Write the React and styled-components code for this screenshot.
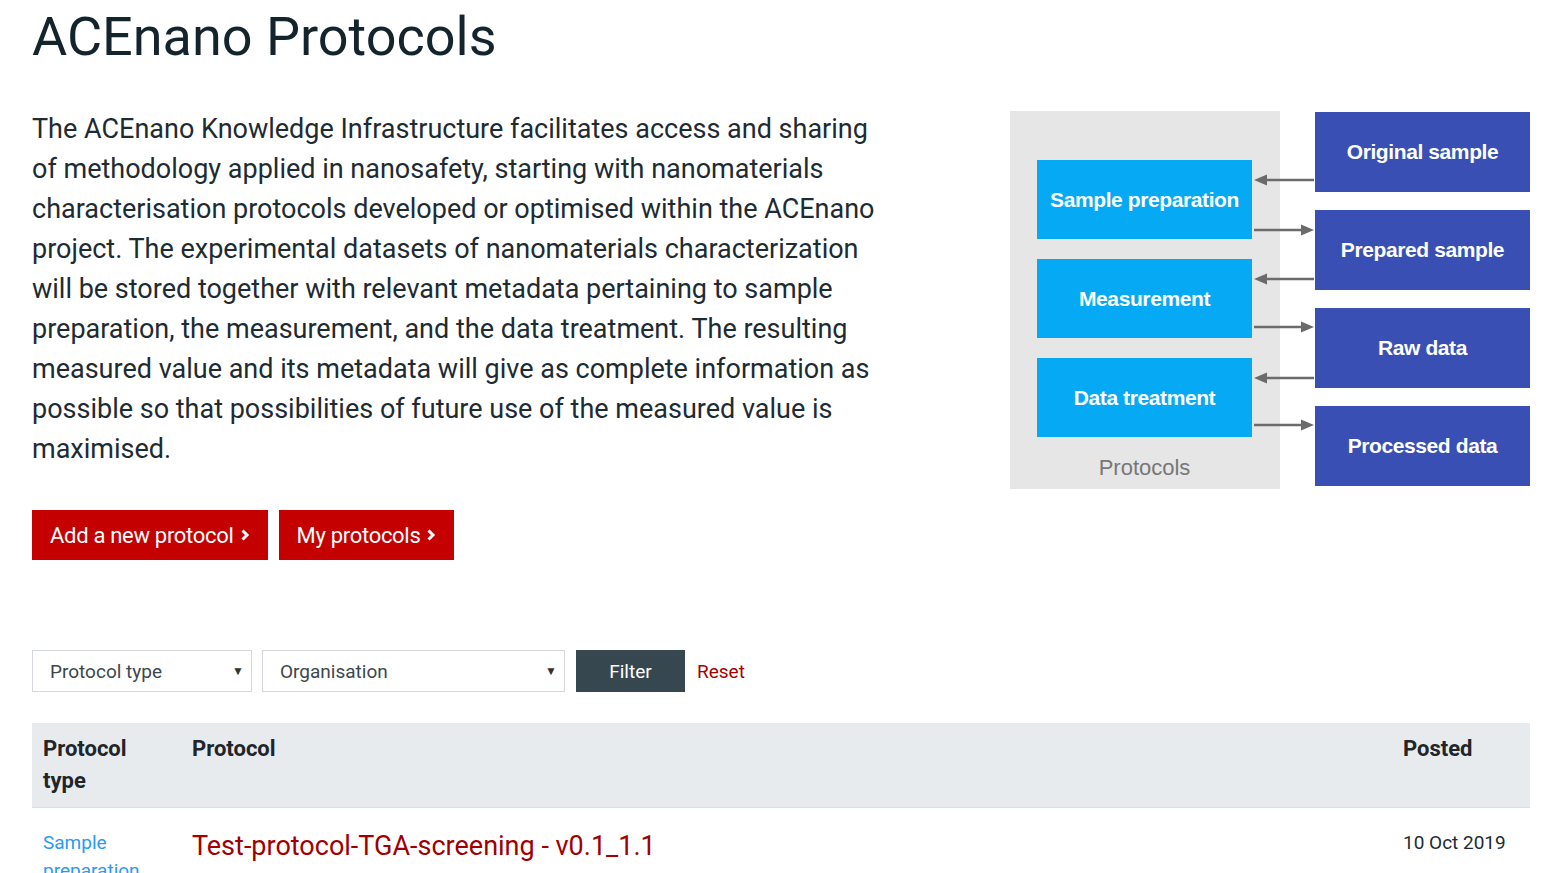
import React from 'react';
import styled, { createGlobalStyle } from 'styled-components';

const GlobalStyle = createGlobalStyle`
  html, body {
    margin: 0;
    padding: 0;
    background: #fff;
    font-family: Roboto, "Noto Sans", sans-serif;
    color: #1d2b33;
  }
`;

const Page = styled.div`
  padding: 0 17px 0 32px;
`;

const Title = styled.h1`
  margin: 0;
  padding-top: 4px;
  font-size: 54px;
  font-weight: 400;
  line-height: 66px;
  color: #14242c;
`;

const Intro = styled.div`
  display: flex;
  justify-content: space-between;
  align-items: flex-start;
  margin-top: 39px;
`;

const IntroColumn = styled.div`
  width: 855px;
`;

const IntroText = styled.p`
  margin: 0;
  font-size: 27px;
  line-height: 40px;
  color: #1d2b33;
`;

const Diagram = styled.div`
  position: relative;
  display: flex;
  justify-content: space-between;
  width: 520px;
  margin-top: 2px;
  font-family: "Liberation Sans", Arial, sans-serif;
  font-weight: 700;
`;

const StagePanel = styled.div`
  display: flex;
  flex-direction: column;
  gap: 20px;
  width: 270px;
  height: 378px;
  box-sizing: border-box;
  padding: 49px 28px 0 27px;
  background: #e6e6e6;
`;

const Stage = styled.div`
  display: flex;
  align-items: center;
  justify-content: center;
  height: 79px;
  background: #06a9f4;
  color: #fff;
  font-size: 21px;
  letter-spacing: -0.4px;
`;

const PanelLabel = styled.div`
  margin-top: -2px;
  text-align: center;
  color: #777;
  font-size: 22px;
  font-weight: 400;
`;

const DataColumn = styled.div`
  display: flex;
  flex-direction: column;
  gap: 18px;
  width: 215px;
  padding-top: 1px;
`;

const DataBox = styled.div`
  display: flex;
  align-items: center;
  justify-content: center;
  height: 80px;
  background: #3a4fb4;
  color: #fff;
  font-size: 21px;
  letter-spacing: -0.4px;
`;

const Arrows = styled.svg`
  position: absolute;
  left: 242px;
  top: 0;
  width: 64px;
  height: 380px;
  overflow: visible;
`;

const Actions = styled.div`
  display: flex;
  gap: 11px;
  margin-top: 41px;
`;

const RedButton = styled.a`
  display: inline-flex;
  align-items: center;
  gap: 6px;
  height: 50px;
  padding: 0 18px;
  background: #c40000;
  color: #fff;
  font-size: 22px;
  text-decoration: none;
  letter-spacing: -0.3px;
`;

const Filters = styled.div`
  display: flex;
  align-items: center;
  gap: 10px;
  margin-top: 90px;
`;

const Select = styled.div`
  display: flex;
  align-items: center;
  justify-content: space-between;
  width: ${p => p.$width}px;
  height: 42px;
  box-sizing: border-box;
  padding: 0 7px 0 17px;
  border: 1px solid #d4d8dc;
  font-size: 19px;
  color: #3c474d;
`;

const Caret = styled.span`
  font-size: 12px;
  color: #333;
`;

const FilterButton = styled.button`
  height: 42px;
  width: 109px;
  margin-left: 1px;
  border: none;
  background: #37474f;
  color: #fff;
  font-family: Roboto, sans-serif;
  font-size: 19px;
`;

const ResetLink = styled.a`
  margin-left: 2px;
  color: #a50000;
  font-size: 19px;
  text-decoration: none;
`;

const Table = styled.div`
  margin-top: 31px;
`;

const Row = styled.div`
  display: grid;
  grid-template-columns: 149px 1fr 138px;
  padding: ${p => (p.$head ? '10px 0' : '19px 0')};
  background: ${p => (p.$head ? '#e8ebee' : 'transparent')};
  border-bottom: ${p => (p.$head ? '1px solid #dadfe3' : 'none')};
`;

const HeadCell = styled.div`
  padding: 0 11px;
  font-size: 22px;
  font-weight: 700;
  line-height: 32px;
  color: #212529;
`;

const TypeLink = styled.a`
  display: block;
  padding: 2px 11px 0;
  color: #2b9af3;
  font-size: 19px;
  line-height: 28px;
  text-decoration: none;
`;

const TitleLink = styled.a`
  display: block;
  padding: 0 11px;
  color: #a00000;
  font-size: 27px;
  line-height: 38px;
  text-decoration: none;
`;

const DateCell = styled.div`
  padding: 2px 11px 0;
  font-size: 19px;
  line-height: 28px;
  color: #1d2b33;
`;

const Chevron = () => (
  <svg width="10" height="14" viewBox="0 0 10 14">
    <path d="M2.5 2.5 L7 7 L2.5 11.5" fill="none" stroke="#fff" strokeWidth="3" />
  </svg>
);

const Arrow = ({ y, dir }) => {
  const left = dir === 'left';
  const tipX = left ? 2 : 62;
  const baseX = left ? 15 : 49;
  return (
    <g>
      <line x1={left ? 62 : 2} y1={y} x2={baseX} y2={y} stroke="#6b6b6b" strokeWidth="2.6" />
      <polygon points={`${tipX},${y} ${baseX},${y - 5.5} ${baseX},${y + 5.5}`} fill="#6b6b6b" />
    </g>
  );
};

const stages = ['Sample preparation', 'Measurement', 'Data treatment'];
const data = ['Original sample', 'Prepared sample', 'Raw data', 'Processed data'];

export default function App() {
  return (
    <>
      <GlobalStyle />
      <Page>
        <Title>ACEnano Protocols</Title>
        <Intro>
          <IntroColumn>
            <IntroText>
              The ACEnano Knowledge Infrastructure facilitates access and sharing of
              methodology applied in nanosafety, starting with nanomaterials characterisation
              protocols developed or optimised within the ACEnano project. The experimental
              datasets of nanomaterials characterization will be stored together with
              relevant metadata pertaining to sample preparation, the measurement, and the
              data treatment. The resulting measured value and its metadata will give as
              complete information as possible so that possibilities of future use of the
              measured value is maximised.
            </IntroText>
            <Actions>
              <RedButton href="#">Add a new protocol <Chevron /></RedButton>
              <RedButton href="#">My protocols <Chevron /></RedButton>
            </Actions>
          </IntroColumn>
          <Diagram>
            <StagePanel>
              {stages.map(s => (
                <Stage key={s}>{s}</Stage>
              ))}
              <PanelLabel>Protocols</PanelLabel>
            </StagePanel>
            <DataColumn>
              {data.map(d => (
                <DataBox key={d}>{d}</DataBox>
              ))}
            </DataColumn>
            <Arrows viewBox="0 0 64 380">
              <Arrow y={69} dir="left" />
              <Arrow y={119} dir="right" />
              <Arrow y={168} dir="left" />
              <Arrow y={216} dir="right" />
              <Arrow y={267} dir="left" />
              <Arrow y={314} dir="right" />
            </Arrows>
          </Diagram>
        </Intro>
        <Filters>
          <Select $width={220}>
            <span>Protocol type</span>
            <Caret>▼</Caret>
          </Select>
          <Select $width={303}>
            <span>Organisation</span>
            <Caret>▼</Caret>
          </Select>
          <FilterButton>Filter</FilterButton>
          <ResetLink href="#">Reset</ResetLink>
        </Filters>
        <Table>
          <Row $head>
            <HeadCell>Protocol type</HeadCell>
            <HeadCell>Protocol</HeadCell>
            <HeadCell>Posted</HeadCell>
          </Row>
          <Row>
            <TypeLink href="#">Sample preparation</TypeLink>
            <TitleLink href="#">Test-protocol-TGA-screening - v0.1_1.1</TitleLink>
            <DateCell>10 Oct 2019</DateCell>
          </Row>
        </Table>
      </Page>
    </>
  );
}
